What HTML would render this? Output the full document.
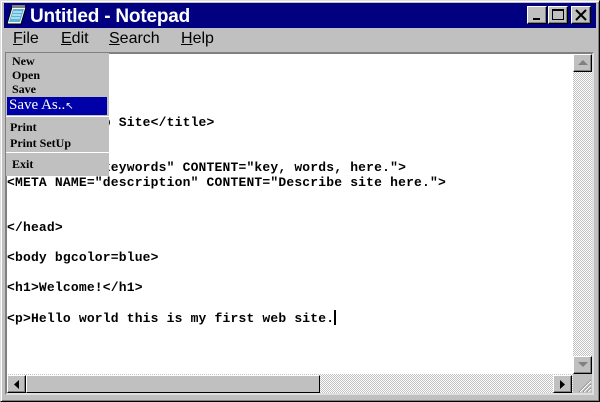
<!DOCTYPE html>
<html><head><style>
*{margin:0;padding:0;box-sizing:border-box}
body{width:600px;height:402px;background:#c0c0c0;position:relative;overflow:hidden;font-family:"Liberation Sans",sans-serif}
.abs{position:absolute}
#win{left:0;top:0;width:600px;height:402px;border:1px solid #dfdfdf;border-right-color:#000;border-bottom-color:#000;box-shadow:inset 1px 1px 0 #fff,inset -1px -1px 0 #808080}
#title{left:4px;top:3px;width:592px;height:25px;background:#000080}
#title span{position:absolute;left:26px;top:3px;color:#fff;font-weight:bold;font-size:19px;letter-spacing:-0.2px}
.btn{position:absolute;top:3px;width:20px;height:18px;background:#c0c0c0;border:1px solid #fff;border-right-color:#000;border-bottom-color:#000;box-shadow:inset -1px -1px 0 #808080}
#menubar span{position:absolute;top:30px;font-size:16px;color:#000}
#edit{left:5px;top:52px;width:589px;height:343px;background:#fff;border:2px solid #000;border-right-color:#dfdfdf;border-bottom-color:#dfdfdf;border-left-color:#808080;border-top-color:#808080}
#txt{left:7px;top:55px;font-family:"Liberation Mono",monospace;font-weight:bold;font-size:13px;letter-spacing:0.18px;line-height:15px;white-space:pre;color:#000}
.check{background-color:#fff;background-image:linear-gradient(45deg,#c0c0c0 25%,transparent 25%,transparent 75%,#c0c0c0 75%),linear-gradient(45deg,#c0c0c0 25%,transparent 25%,transparent 75%,#c0c0c0 75%);background-size:2px 2px;background-position:0 0,1px 1px}
.sb{position:absolute;background:#c0c0c0;border:1px solid #fff;border-right-color:#000;border-bottom-color:#000;box-shadow:inset -1px -1px 0 #808080}
#menu{left:6px;top:53px;width:103px;height:123px;background:#c0c0c0;font-family:"Liberation Serif",serif;font-weight:bold;font-size:12px;color:#000}
#menu div{position:absolute;left:6px}
</style></head><body>
<div id="win" class="abs"></div>
<div id="title" class="abs">
<svg class="abs" style="left:2px;top:1px" width="22" height="22" viewBox="0 0 22 22">
<polygon points="6,3 20,3 15,20 1,20" fill="#fff" stroke="#000" stroke-width="1"/>
<polygon points="7,5 18,5 14,18 3,18" fill="#5ab4d6"/>
<line x1="7" y1="8" x2="16" y2="8" stroke="#fff"/><line x1="6" y1="11" x2="15" y2="11" stroke="#fff"/><line x1="5" y1="14" x2="14" y2="14" stroke="#fff"/>
<rect x="6" y="1" width="13" height="3" fill="#808080"/>
</svg>
<span>Untitled - Notepad</span>
<div class="btn" style="left:523px"><div class="abs" style="left:5px;top:11px;width:7px;height:2px;background:#000"></div></div>
<div class="btn" style="left:544px"><div class="abs" style="left:3px;top:2px;width:12px;height:11px;border:1px solid #000;border-top-width:2px"></div></div>
<div class="btn" style="left:567px"><svg class="abs" style="left:3px;top:2px" width="12" height="12"><path d="M1 1L11 11M11 1L1 11" stroke="#000" stroke-width="2"/></svg></div>
</div>
<div id="menubar">
<span style="left:13px"><u>F</u>ile</span>
<span style="left:61px"><u>E</u>dit</span>
<span style="left:109px"><u>S</u>earch</span>
<span style="left:181px"><u>H</u>elp</span>
</div>
<div id="edit" class="abs"></div>
<div id="txt" class="abs">&lt;html&gt;

&lt;head&gt;

&lt;title&gt;My Web Site&lt;/title&gt;


&lt;META NAME="keywords" CONTENT="key, words, here."&gt;
&lt;META NAME="description" CONTENT="Describe site here."&gt;


&lt;/head&gt;

&lt;body bgcolor=blue&gt;

&lt;h1&gt;Welcome!&lt;/h1&gt;

&lt;p&gt;Hello world this is my first web site.<span style="display:inline-block;width:2px;height:15px;background:#000;vertical-align:-3px"></span></div>
<div class="abs check" style="left:573px;top:54px;width:19px;height:320px"></div>
<div class="sb" style="left:573px;top:54px;width:19px;height:18px"><svg class="abs" style="left:4px;top:5px" width="10" height="6"><polygon points="5,0 10,5 0,5" fill="#808080"/></svg></div>
<div class="sb" style="left:573px;top:356px;width:19px;height:18px"><svg class="abs" style="left:4px;top:5px" width="10" height="6"><polygon points="0,0 10,0 5,5" fill="#808080"/></svg></div>
<div class="abs check" style="left:7px;top:374px;width:566px;height:19px"></div>
<div class="sb" style="left:7px;top:375px;width:19px;height:18px"><svg class="abs" style="left:6px;top:4px" width="6" height="10"><polygon points="5,0 5,9 0,4.5" fill="#000"/></svg></div>
<div class="sb" style="left:26px;top:375px;width:294px;height:18px;box-shadow:none"></div>
<div class="sb" style="left:553px;top:375px;width:19px;height:18px"><svg class="abs" style="left:6px;top:4px" width="6" height="10"><polygon points="0,0 0,9 5,4.5" fill="#000"/></svg></div>
<div class="abs" style="left:573px;top:374px;width:19px;height:19px;background:#c0c0c0"><svg width="19" height="19"><path d="M6 18L18 6M10 18L18 10M14 18L18 14" stroke="#808080" stroke-width="1"/><path d="M7 18L18 7M11 18L18 11M15 18L18 15" stroke="#fff" stroke-width="1"/></svg></div>
<div id="menu" class="abs">
<div style="top:1px">New</div>
<div style="top:15px">Open</div>
<div style="top:29px">Save</div>
<div class="abs" style="left:1px;top:44px;width:100px;height:18px;background:#0000a8"></div>
<div style="left:3px;top:44px;color:#fff;font-size:15px;font-weight:normal">Save As..<span style="font-size:10px">↖</span></div>
<div class="abs" style="left:0;top:63px;width:103px;height:1px;background:#fff"></div>
<div style="left:4px;top:67px">Print</div>
<div style="left:4px;top:83px">Print SetUp</div>
<div class="abs" style="left:0;top:99px;width:103px;height:1px;background:#fff"></div>
<div style="top:104px">Exit</div>
</div>
</body></html>
